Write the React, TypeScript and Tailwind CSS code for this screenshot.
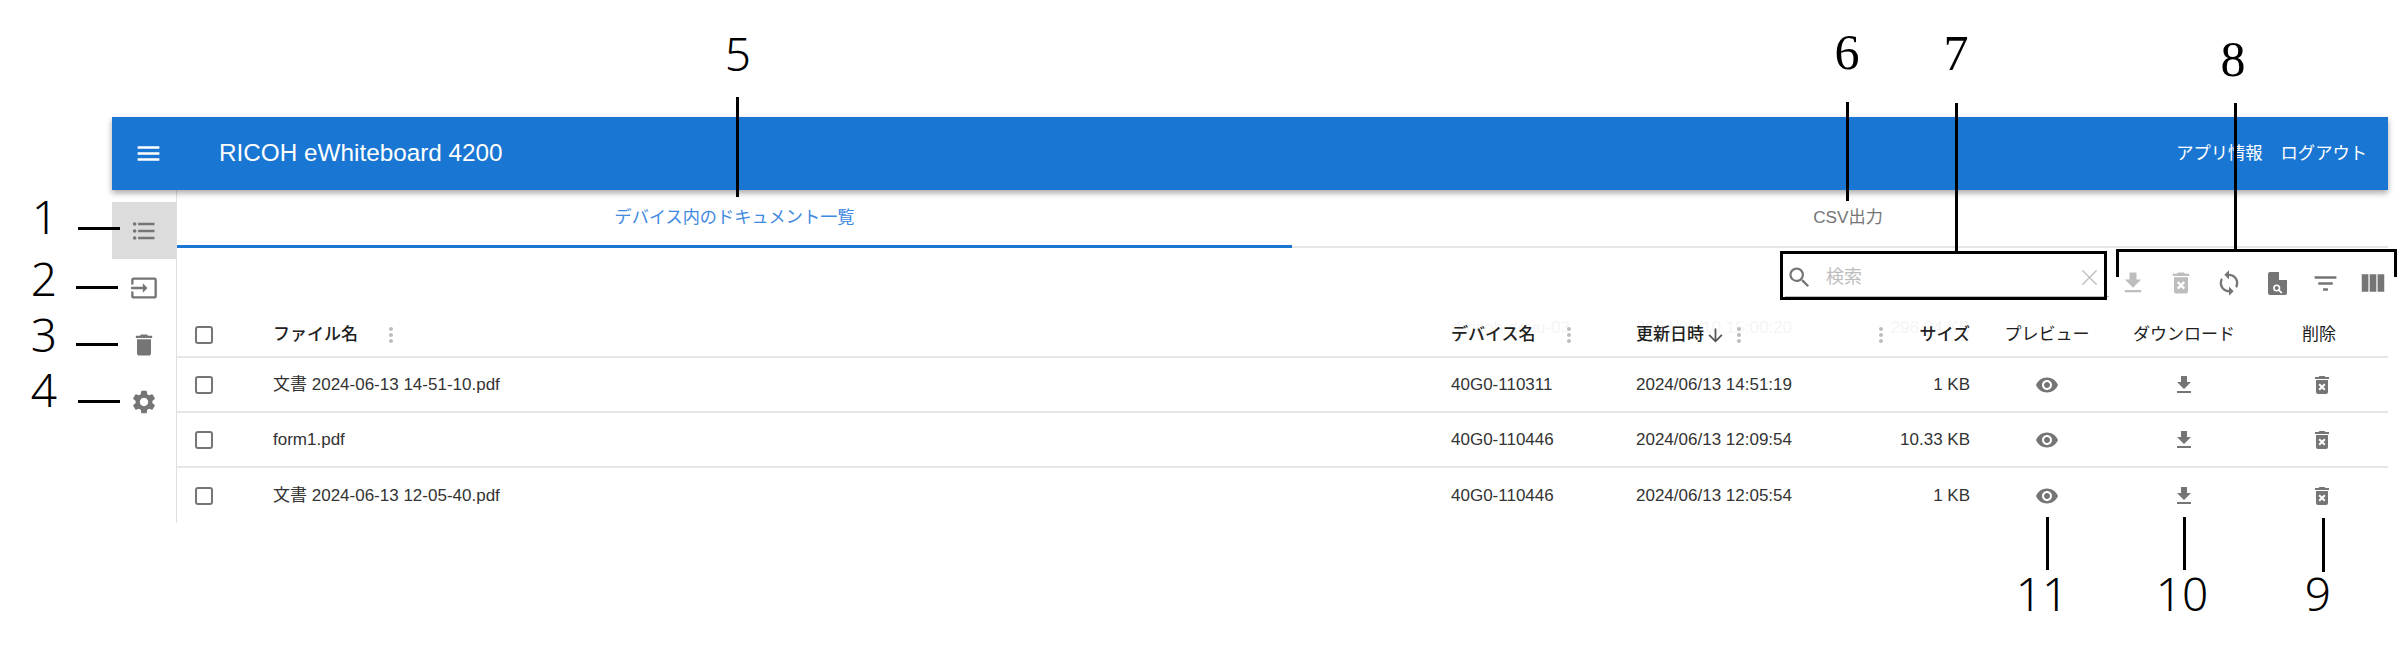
import {
  MdDelete,
  MdDeleteForever,
  MdFileDownload,
  MdFilterList,
  MdFormatListBulleted,
  MdInput,
  MdMenu,
  MdMoreVert,
  MdArrowDownward,
  MdSearch,
  MdSettings,
  MdSync,
  MdViewColumn,
  MdVisibility,
} from "react-icons/md";
import { X } from "lucide-react";

const FONT = "font-['Liberation_Sans','Noto_Sans_CJK_JP',sans-serif]";
const COLS = "grid grid-cols-[96px_1178px_185px_244px_90px_154px_120px_144px] items-center";

const ROWS = [
  { name: "文書 2024-06-13 14-51-10.pdf", device: "40G0-110311", date: "2024/06/13 14:51:19", size: "1 KB" },
  { name: "form1.pdf", device: "40G0-110446", date: "2024/06/13 12:09:54", size: "10.33 KB" },
  { name: "文書 2024-06-13 12-05-40.pdf", device: "40G0-110446", date: "2024/06/13 12:05:54", size: "1 KB" },
];

function Checkbox() {
  return <span className="ml-[18px] block h-[18px] w-[18px] rounded-[3px] border-2 border-[#757575]" />;
}

function Dots() {
  return <MdMoreVert size={24} className="shrink-0 text-[#bdbdbd]" />;
}

// solid page with a clipped corner and a small lens, not the stock find_in_page glyph
function DocSearchIcon() {
  return (
    <svg width="19" height="23" viewBox="0 0 19 23" aria-hidden>
      <path fill="currentColor" d="M2 0H11V8H19V21a2 2 0 0 1-2 2H2a2 2 0 0 1-2-2V2a2 2 0 0 1 2-2z" />
      <circle cx="8.7" cy="16" r="2.8" fill="none" stroke="#fff" strokeWidth="1.6" />
      <path d="M10.8 18l2.6 2.7" stroke="#fff" strokeWidth="1.7" strokeLinecap="round" />
    </svg>
  );
}

function Sidebar() {
  return (
    <aside className="h-[333px] w-[65px] shrink-0 border-r border-[#e0e0e0] pt-[12px] text-[#757575]">
      <div className="flex h-[57px] items-center justify-center bg-[#dcdcdc]">
        <MdFormatListBulleted size={28} />
      </div>
      <div className="flex h-[57px] items-center justify-center">
        <MdInput size={28} />
      </div>
      <div className="flex h-[57px] items-center justify-center">
        <MdDelete size={28} />
      </div>
      <div className="flex h-[57px] items-center justify-center">
        <MdSettings size={28} />
      </div>
    </aside>
  );
}

function Toolbar() {
  return (
    <div className="-mr-[9px] flex h-[53px] justify-end">
      <div className="mt-[10px] flex h-[39px] w-[324px] items-center border-b border-[#bdbdbd] pl-[1px] pr-[6px]">
        <MdSearch size={27} className="text-[#757575]" />
        <span className="ml-[13px] flex-1 text-[18px] text-[#bdbdbd]">検索</span>
        <X size={27} strokeWidth={1.2} className="text-[#bdbdbd]" />
      </div>
      <div className="mt-[11px] flex h-[48px] text-[#757575]">
        <span className="flex w-[48px] items-center justify-center text-[#bdbdbd]"><MdFileDownload size={28} /></span>
        <span className="flex w-[48px] items-center justify-center text-[#bdbdbd]"><MdDeleteForever size={28} /></span>
        <span className="flex w-[48px] items-center justify-center"><MdSync size={28} /></span>
        <span className="flex w-[48px] items-center justify-center"><DocSearchIcon /></span>
        <span className="flex w-[48px] items-center justify-center"><MdFilterList size={29} /></span>
        <span className="flex w-[48px] items-center justify-center"><MdViewColumn size={30} /></span>
      </div>
    </div>
  );
}

function DocumentTable() {
  return (
    <div className="relative text-[17px] text-[#333333]">
      {/* faint row scrolled under the sticky header */}
      <span className="absolute left-[1274px] top-[14px] text-[#f5f5f5]">d-ricoh-devu-03</span>
      <span className="absolute left-[1459px] top-[14px] text-[#f5f5f5]">2024/06/10 15:00:20</span>
      <span className="absolute right-[418px] top-[14px] text-[#f5f5f5]">296.94 KB</span>
      <div className={`${COLS} relative h-[57px] whitespace-nowrap border-b-2 border-[#e6e6e6] pt-[13px] font-medium text-[#212121]`}>
        <Checkbox />
        <div className="flex items-center">
          <span>ファイル名</span>
          <span className="ml-[21px]"><Dots /></span>
        </div>
        <div className="flex items-center">
          <span>デバイス名</span>
          <span className="ml-[21px]"><Dots /></span>
        </div>
        <div className="flex items-center">
          <span className="shrink-0">更新日時</span>
          <MdArrowDownward size={21} className="ml-[1px] shrink-0 text-[#555555]" />
          <span className="ml-[1px] shrink-0"><Dots /></span>
          <span className="ml-[118px] shrink-0"><Dots /></span>
        </div>
        <div className="text-right">サイズ</div>
        <div className="text-center font-normal">プレビュー</div>
        <div className="text-center font-normal">ダウンロード</div>
        <div className="pl-[6px] text-center font-normal">削除</div>
      </div>
      {ROWS.map((row, i) => (
        <div key={i} className={`${COLS} h-[55px] ${i < ROWS.length - 1 ? "border-b-2 border-[#e6e6e6]" : ""}`}>
          <Checkbox />
          <div>{row.name}</div>
          <div>{row.device}</div>
          <div>{row.date}</div>
          <div className="text-right">{row.size}</div>
          <div className="flex justify-center text-[#757575]"><MdVisibility size={24} /></div>
          <div className="flex justify-center text-[#757575]"><MdFileDownload size={24} /></div>
          <div className="flex justify-center pl-[12px] text-[#757575]"><MdDeleteForever size={24} /></div>
        </div>
      ))}
    </div>
  );
}

function Callouts() {
  const sans = "absolute w-[80px] text-center font-['Noto_Sans',sans-serif] text-[46px] font-light leading-none text-black";
  const serif = "absolute w-[80px] text-center font-['Liberation_Serif',serif] text-[50px] leading-none text-black";
  return (
    <div aria-hidden className="absolute inset-0 z-20">
      <span className={`${sans} left-[5px] top-[193px]`}>1</span>
      <span className={`${sans} left-[4px] top-[255px]`}>2</span>
      <span className={`${sans} left-[4px] top-[311px]`}>3</span>
      <span className={`${sans} left-[4px] top-[366px]`}>4</span>
      <span className={`${sans} left-[698px] top-[30px]`}>5</span>
      <span className={`${serif} left-[1807px] top-[27px]`}>6</span>
      <span className={`${serif} left-[1916px] top-[28px]`}>7</span>
      <span className={`${serif} left-[2193px] top-[34px]`}>8</span>
      <span className={`${sans} left-[2278px] top-[570px]`}>9</span>
      <span className={`${sans} left-[2142px] top-[570px]`}>10</span>
      <span className={`${sans} left-[2002px] top-[570px]`}>11</span>

      <i className="absolute left-[78px] top-[227px] h-[3px] w-[42px] bg-black" />
      <i className="absolute left-[76px] top-[286px] h-[3px] w-[42px] bg-black" />
      <i className="absolute left-[76px] top-[343px] h-[3px] w-[42px] bg-black" />
      <i className="absolute left-[78px] top-[400px] h-[3px] w-[42px] bg-black" />

      <i className="absolute left-[736px] top-[97px] h-[100px] w-[3px] bg-black" />
      <i className="absolute left-[1846px] top-[102px] h-[99px] w-[3px] bg-black" />
      <i className="absolute left-[1955px] top-[103px] h-[148px] w-[3px] bg-black" />
      <i className="absolute left-[2234px] top-[103px] h-[147px] w-[3px] bg-black" />

      <div className="absolute left-[1780px] top-[251px] h-[49px] w-[327px] border-[3px] border-black" />
      <div className="absolute left-[2116px] top-[249px] h-[28px] w-[281px] border-x-[3px] border-t-[3px] border-black" />

      <i className="absolute left-[2046px] top-[517px] h-[53px] w-[3px] bg-black" />
      <i className="absolute left-[2183px] top-[517px] h-[53px] w-[3px] bg-black" />
      <i className="absolute left-[2322px] top-[518px] h-[54px] w-[3px] bg-black" />
    </div>
  );
}

export default function App() {
  return (
    <div className={`relative h-[659px] w-[2397px] overflow-hidden bg-white ${FONT}`}>
      <div className="ml-[112px] w-[2276px] pt-[117px]">
        <header className="relative z-10 flex h-[73px] items-center bg-[#1976d2] text-white shadow-[0_3px_6px_rgba(0,0,0,0.35)]">
          <MdMenu size={29} className="ml-[22px]" />
          <h1 className="ml-[56px] flex-1 text-[24.3px] font-normal">RICOH eWhiteboard 4200</h1>
          <a className="text-[17.3px]">アプリ情報</a>
          <a className="ml-[18px] mr-[21px] text-[17.3px]">ログアウト</a>
        </header>
        <div className="flex">
          <Sidebar />
          <main className="min-w-0 flex-1">
            <div className="flex h-[58px] border-b-2 border-[#e6e6e6] text-[17.2px]">
              <div className="-mb-[2px] flex h-[58px] w-[1115px] items-center justify-center border-b-[3px] border-[#1976d2] text-[#3f8ae0]">
                デバイス内のドキュメント一覧
              </div>
              <div className="flex flex-1 items-center justify-center pl-[16px] text-[#757575]">CSV出力</div>
            </div>
            <Toolbar />
            <DocumentTable />
          </main>
        </div>
      </div>
      <Callouts />
    </div>
  );
}
